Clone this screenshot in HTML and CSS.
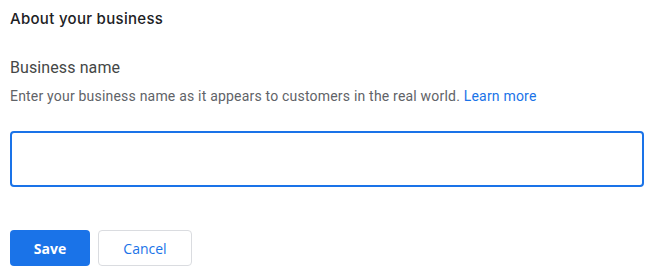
FILE: index.html
```html
<!DOCTYPE html>
<html lang="en">
<head>
<meta charset="utf-8">
<title>About your business</title>
<link rel="stylesheet" href="styles.css">
</head>
<body>
<main class="form">
  <h2 class="section-title">About your business</h2>
  <div class="field">
    <label class="field-label" for="bizname">Business name</label>
    <p class="field-help">Enter your business name as it appears to customers in the real world. <a href="#" class="link">Learn more</a></p>
    <input id="bizname" class="text-input" type="text">
  </div>
  <div class="actions">
    <button class="btn btn-primary" type="button">Save</button>
    <button class="btn btn-secondary" type="button">Cancel</button>
  </div>
</main>
</body>
</html>
```
FILE: styles.css
```css
html, body {
  margin: 0;
  padding: 0;
  background: #ffffff;
}
body {
  font-family: Roboto, "Liberation Sans", Arial, sans-serif;
  color: #3c4043;
}
.form {
  padding: 0 10px;
  display: flex;
  flex-direction: column;
}
.section-title {
  margin: 0;
  padding-top: 9px;
  font-family: Inter, "Open Sans", Roboto, sans-serif;
  font-size: 15px;
  font-weight: 500;
  line-height: 20px;
  color: #202124;
  letter-spacing: 0.3px;
}
.field {
  display: flex;
  flex-direction: column;
  margin-top: 27px;
}
.field-label {
  font-size: 16px;
  line-height: 24px;
  color: #444746;
  letter-spacing: 0.1px;
}
.field-help {
  margin: 6px 0 0;
  font-size: 14px;
  line-height: 20px;
  color: #5f6368;
  letter-spacing: 0.2px;
}
.link {
  color: #1a73e8;
  text-decoration: none;
}
.text-input {
  margin-top: 25px;
  box-sizing: border-box;
  width: 100%;
  height: 56px;
  border: 2px solid #1a73e8;
  border-radius: 4px;
  outline: none;
  padding: 0 14px;
  font-size: 16px;
  font-family: inherit;
}
.actions {
  display: flex;
  gap: 8px;
  margin-top: 43px;
}
.btn {
  box-sizing: border-box;
  height: 36px;
  border-radius: 4px;
  font-family: "Open Sans", Roboto, sans-serif;
  font-size: 14px;
  cursor: pointer;
}
.btn-primary {
  width: 80px;
  background: #1a73e8;
  border: none;
  color: #ffffff;
  font-weight: 700;
}
.btn-secondary {
  width: 94px;
  background: #ffffff;
  border: 1px solid #dadce0;
  color: #1a73e8;
  font-weight: 500;
}
```
